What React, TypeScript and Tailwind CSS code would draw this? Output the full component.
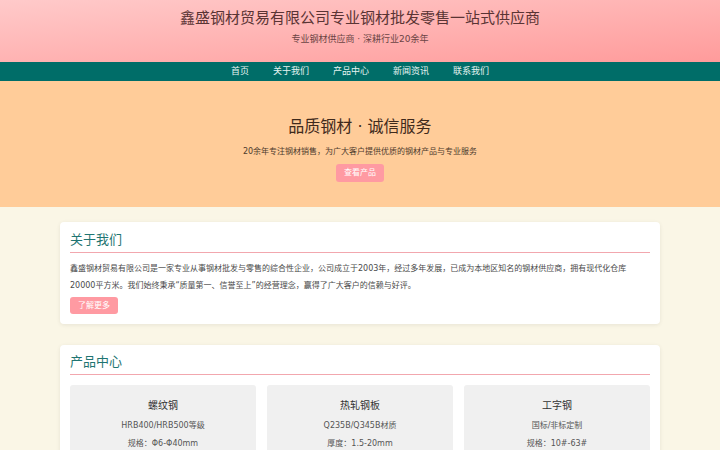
const FONT = { fontFamily: '"DejaVu Sans", "Noto Sans CJK SC", sans-serif' };

const NAV = ["首页", "关于我们", "产品中心", "新闻资讯", "联系我们"];

const PRODUCTS = [
  { name: "螺纹钢", grade: "HRB400/HRB500等级", spec: "规格：Φ6-Φ40mm" },
  { name: "热轧钢板", grade: "Q235B/Q345B材质", spec: "厚度：1.5-20mm" },
  { name: "工字钢", grade: "国标/非标定制", spec: "规格：10#-63#" },
];

function SectionTitle({ children }: { children: React.ReactNode }) {
  return (
    <h2 className="border-b border-[#f2a7ae] pb-[4px] text-[13px] leading-[16px] text-[#1f7572]">
      {children}
    </h2>
  );
}

export default function App() {
  return (
    <div className="min-h-[450px] bg-[#faf6e6]" style={FONT}>
      <header className="bg-gradient-to-br from-[#ffcaca] to-[#ff9b9b] pt-[8px] pb-[16px] text-center">
        <h1 className="text-[15px] leading-[20px] text-[#5a3434]">
          鑫盛钢材贸易有限公司专业钢材批发零售一站式供应商
        </h1>
        <p className="mt-[4px] text-[9px] leading-[14px] text-[#6b4444]">
          专业钢材供应商 · 深耕行业20余年
        </p>
      </header>

      <nav className="flex h-[19px] items-center justify-center gap-6 bg-[#006d68] text-[9px] text-[#e6f4f1]">
        {NAV.map((n) => (
          <a key={n} href="#">
            {n}
          </a>
        ))}
      </nav>

      <section className="flex h-[126px] flex-col items-center bg-[#ffcc99] pt-[34px]">
        <h2 className="text-[16px] leading-[24px] text-[#3f2a1c]">品质钢材 · 诚信服务</h2>
        <p className="mt-[6px] text-[8px] leading-[14px] text-[#4d3a2c]">
          20余年专注钢材销售，为广大客户提供优质的钢材产品与专业服务
        </p>
        <button className="mt-[5px] h-[18px] rounded-[3px] bg-[#ff9aa2] px-[8px] text-[8px] text-white">
          查看产品
        </button>
      </section>

      <main className="mx-auto flex w-[600px] flex-col gap-[21px] pt-[15px] pb-[20px]">
        <div className="rounded-[4px] bg-white px-[10px] pt-[10px] pb-[10px] shadow-[0_1px_4px_rgba(0,0,0,0.08)]">
          <SectionTitle>关于我们</SectionTitle>
          <p className="mt-[7px] text-[8px] leading-[17px] text-[#4a4a4a]">
            鑫盛钢材贸易有限公司是一家专业从事钢材批发与零售的综合性企业，公司成立于2003年，经过多年发展，已成为本地区知名的钢材供应商，拥有现代化仓库20000平方米。我们始终秉承“质量第一、信誉至上”的经营理念，赢得了广大客户的信赖与好评。
          </p>
          <button className="mt-[3px] block h-[17px] rounded-[3px] bg-[#ff9aa2] px-[8px] text-[8px] text-white">
            了解更多
          </button>
        </div>

        <div className="rounded-[4px] bg-white px-[10px] pt-[9px] pb-[12px] shadow-[0_1px_4px_rgba(0,0,0,0.08)]">
          <SectionTitle>产品中心</SectionTitle>
          <div className="mt-[10px] grid grid-cols-3 gap-[11px]">
            {PRODUCTS.map((p) => (
              <div key={p.name} className="rounded-[3px] bg-[#f0f0f0] pt-[13px] pb-[12px] text-center">
                <div className="text-[10px] leading-[16px] text-[#333]">{p.name}</div>
                <div className="mt-[3px] text-[8px] leading-[18px] text-[#555]">{p.grade}</div>
                <div className="text-[8px] leading-[18px] text-[#555]">{p.spec}</div>
              </div>
            ))}
          </div>
        </div>
      </main>
    </div>
  );
}
